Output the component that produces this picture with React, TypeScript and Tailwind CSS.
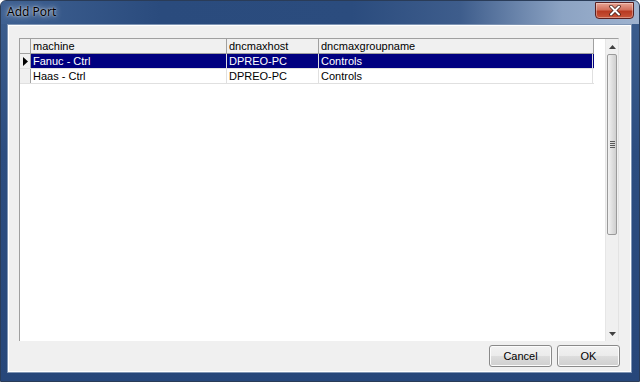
import React from "react";

type Row = { machine: string; host: string; group: string };

const rows: Row[] = [
  { machine: "Fanuc - Ctrl", host: "DPREO-PC", group: "Controls" },
  { machine: "Haas - Ctrl", host: "DPREO-PC", group: "Controls" },
];

const cellFont = { fontFamily: '"Liberation Sans", Arial, sans-serif' };

function CloseButton() {
  return (
    <div className="mr-[5px] mt-px flex h-[17px] w-[39px] items-center justify-center rounded-b-[4px] border border-[#5a2020] bg-[linear-gradient(to_bottom,#e8a494_0%,#d2705c_45%,#b83a22_55%,#c8553a_100%)] shadow-[inset_0_0_0_1px_rgba(255,255,255,0.35)]">
      <svg width="12" height="11" viewBox="0 0 12 11">
        <path d="M2 1.5 L10 9.5 M10 1.5 L2 9.5" stroke="#3a1a14" strokeWidth="3.4" strokeLinecap="round" />
        <path d="M2 1.5 L10 9.5 M10 1.5 L2 9.5" stroke="#ffffff" strokeWidth="2" strokeLinecap="round" />
      </svg>
    </div>
  );
}

function ScrollBar() {
  return (
    <div className="flex w-[13px] flex-col border-l border-[#e6e6e6] bg-[#f0f0f0]">
      <div className="flex h-[15px] items-center justify-center">
        <svg width="7" height="4" viewBox="0 0 7 4">
          <path d="M0 4 L3.5 0 L7 4 Z" fill="#404040" />
        </svg>
      </div>
      <div className="mx-px flex h-[181px] flex-col items-center justify-center gap-px rounded-[2px] border border-[#9a9a9a] bg-[linear-gradient(to_right,#f2f2f2,#dcdcdc_60%,#cfcfcf)]">
        <div className="h-px w-[5px] bg-[#5a5a5a]" />
        <div className="h-px w-[5px] bg-[#5a5a5a]" />
        <div className="h-px w-[5px] bg-[#5a5a5a]" />
        <div className="h-px w-[5px] bg-[#5a5a5a]" />
      </div>
      <div className="flex-1" />
      <div className="flex h-[15px] items-center justify-center">
        <svg width="7" height="4" viewBox="0 0 7 4">
          <path d="M0 0 L7 0 L3.5 4 Z" fill="#404040" />
        </svg>
      </div>
    </div>
  );
}

function Grid() {
  return (
    <div className="flex h-[303px] w-[600px] border-t border-l border-[#a0a0a0] border-r border-r-[#e3e3e3] bg-white" style={cellFont}>
      <div className="flex-1 text-[11px] leading-[14px] text-black">
        <div className="flex h-[15px] w-[574px] border-b border-[#a0a0a0] bg-[#f0f0f0]">
          <div className="w-[11px] border-r border-[#a0a0a0]" />
          <div className="w-[196px] border-r border-[#a0a0a0] pl-[2px]">machine</div>
          <div className="w-[92px] border-r border-[#a0a0a0] pl-[2px]">dncmaxhost</div>
          <div className="w-[275px] border-r border-[#a0a0a0] pl-[2px]">dncmaxgroupname</div>
        </div>
        {rows.map((r, i) => {
          const sel = i === 0;
          return (
            <div key={r.machine} className="flex h-[15px] w-[574px] border-b border-[#e0e0e0]">
              <div className="flex w-[11px] items-center justify-center border-r border-[#a0a0a0] bg-[#f0f0f0]">
                {sel && (
                  <svg width="5" height="9" viewBox="0 0 5 9">
                    <path d="M0 0 L5 4.5 L0 9 Z" fill="#000000" />
                  </svg>
                )}
              </div>
              <div className={"flex flex-1 " + (sel ? "bg-[#000080] text-white" : "bg-white text-black")}>
                <div className="w-[196px] border-r border-[#e0e0e0] pl-[2px]">{r.machine}</div>
                <div className="w-[92px] border-r border-[#e0e0e0] pl-[2px]">{r.host}</div>
                <div className="w-[274px] border-r border-[#e0e0e0] pl-[2px]">{r.group}</div>
              </div>
            </div>
          );
        })}
      </div>
      <ScrollBar />
    </div>
  );
}

function Btn({ label }: { label: string }) {
  return (
    <button
      className="h-[22px] w-[63px] rounded-[3px] border border-[#8a8a8a] bg-[linear-gradient(to_bottom,#f2f2f2_0%,#ebebeb_50%,#dddddd_51%,#cfcfcf_100%)] text-[11px] text-black shadow-[inset_0_0_0_1px_#fcfcfc]"
      style={cellFont}
    >
      {label}
    </button>
  );
}

export default function App() {
  return (
    <div className="flex h-[382px] w-[640px] flex-col overflow-hidden rounded-t-[6px] border border-[#2a3c58] bg-[linear-gradient(to_bottom,#3d5f8f_0%,#2c4d80_40%,#27477a_100%)]">
      <div className="flex h-[23px] items-start bg-[linear-gradient(to_right,#3f6192_0%,#2a4b7d_25%,#2b4c7e_55%,#3e5d8c_72%,#8ca3c3_88%,#9fb3cf_100%)]">
        <div
          className="mt-[3px] pl-[6px] text-[12px] leading-[16px] text-black [text-shadow:0_0_6px_rgba(255,255,255,0.9),0_0_2px_rgba(255,255,255,0.8)]"
          style={{ fontFamily: '"Noto Sans", "Open Sans", sans-serif' }}
        >
          Add Port
        </div>
        <div className="flex-1" />
        <CloseButton />
      </div>
      <div className="ml-[6px] mr-[7px] mb-[8px] flex flex-1 flex-col border border-[#7f95b4] bg-[#f0f0f0] shadow-[inset_0_0_0_1px_#ffffff]">
        <div className="pl-[11px] pt-[13px]">
          <Grid />
        </div>
        <div className="flex w-[612px] justify-end gap-[5px] pt-[4px]">
          <Btn label="Cancel" />
          <Btn label="OK" />
        </div>
      </div>
    </div>
  );
}
